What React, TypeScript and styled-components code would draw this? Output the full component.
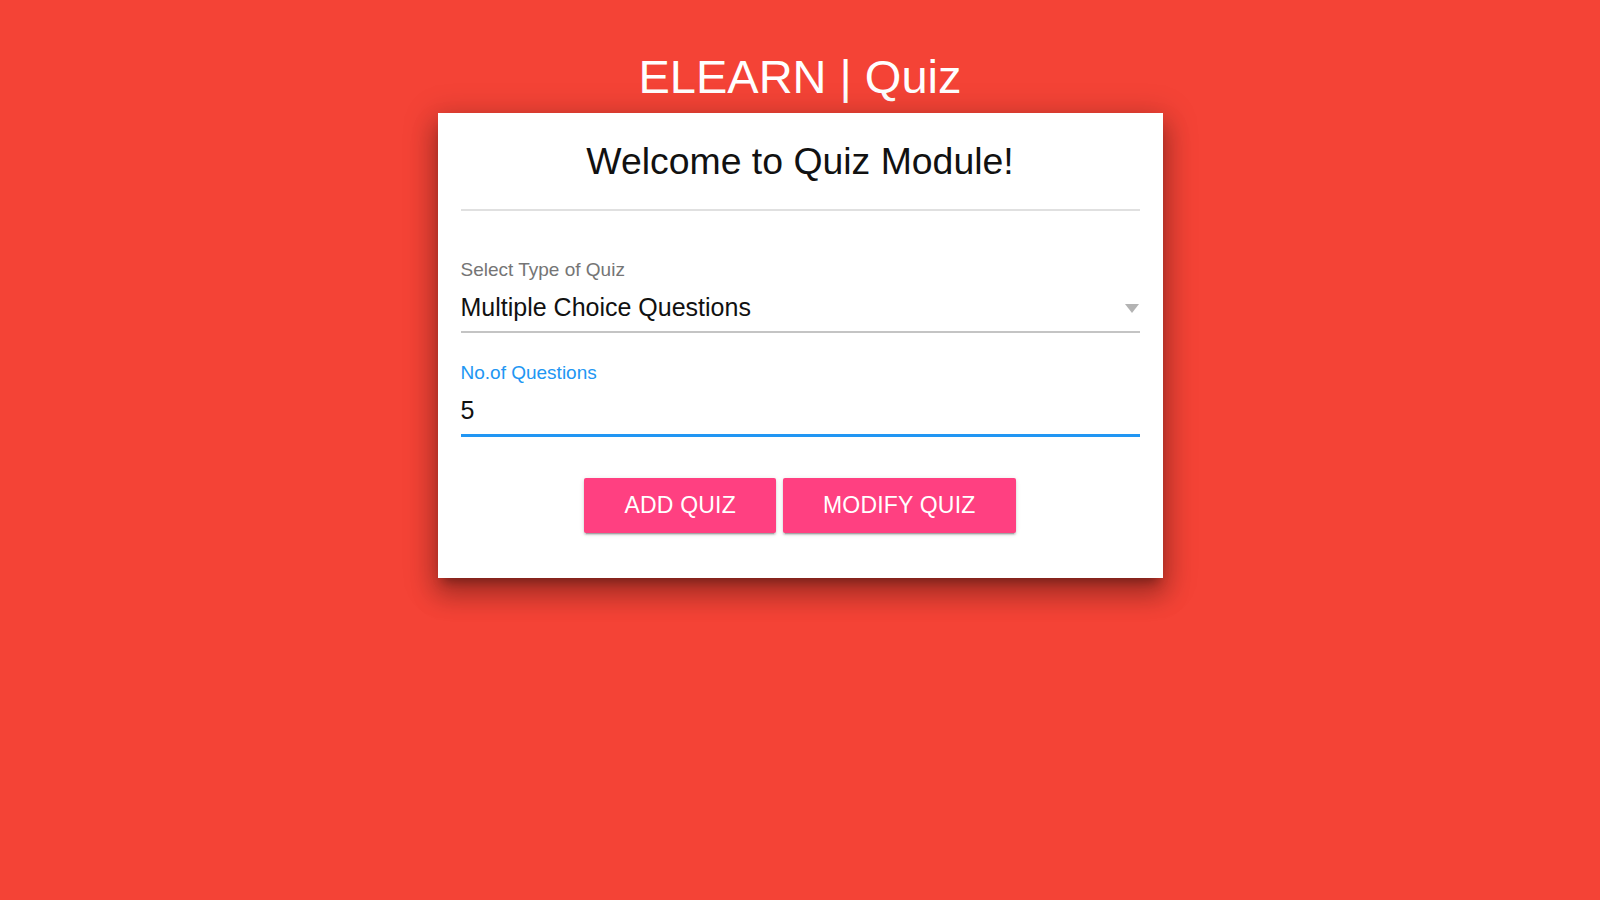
import React from "react";
import styled, { createGlobalStyle } from "styled-components";

const GlobalStyle = createGlobalStyle`
  html, body {
    margin: 0;
    padding: 0;
    background: #f44336;
    font-family: "Liberation Sans", Arial, sans-serif;
  }
`;

const Page = styled.div`
  width: 1600px;
  height: 900px;
  display: flex;
  flex-direction: column;
  align-items: center;
  box-sizing: border-box;
  padding-top: 50px;
`;

const Title = styled.h1`
  margin: 0 0 9px;
  font-size: 47px;
  font-weight: 400;
  line-height: 54px;
  color: #ffffff;
`;

const Card = styled.div`
  width: 725px;
  box-sizing: border-box;
  background: #ffffff;
  padding: 27px 23px 45px;
  display: flex;
  flex-direction: column;
  box-shadow: 0 16px 24px 2px rgba(0, 0, 0, 0.22),
    0 6px 30px 5px rgba(0, 0, 0, 0.18), 0 8px 10px -5px rgba(0, 0, 0, 0.3);
`;

const CardTitle = styled.h2`
  margin: 0;
  font-size: 37.4px;
  font-weight: 400;
  line-height: 43px;
  color: #111111;
  text-align: center;
  padding-bottom: 26px;
  border-bottom: 2px solid #e0e0e0;
`;

const Field = styled.div<{ $top: number }>`
  display: flex;
  flex-direction: column;
  margin-top: ${(p) => p.$top}px;
`;

const Label = styled.label<{ $active?: boolean }>`
  font-size: 19px;
  line-height: 21px;
  color: ${(p) => (p.$active ? "#2196f3" : "#757575")};
`;

const InputRow = styled.div<{ $active?: boolean }>`
  display: flex;
  align-items: center;
  justify-content: space-between;
  margin-top: 13px;
  height: 28px;
  padding-bottom: 10px;
  border-bottom: ${(p) => (p.$active ? "3px solid #2196f3" : "2px solid #c4c4c4")};
`;

const Value = styled.span`
  font-size: 25px;
  line-height: 28px;
  color: #111111;
`;

const Caret = styled.svg`
  width: 14px;
  height: 9px;
  margin-right: 1px;
  margin-top: 2px;
`;

const Buttons = styled.div`
  display: flex;
  justify-content: center;
  gap: 7px;
  margin-top: 41px;
`;

const Button = styled.button`
  height: 55px;
  padding: 0 40px;
  border: none;
  border-radius: 2px;
  background: #ff4081;
  color: #ffffff;
  font-family: "Liberation Sans", Arial, sans-serif;
  font-size: 23px;
  letter-spacing: 0.2px;
  text-transform: uppercase;
  cursor: pointer;
  box-shadow: 0 2px 2px 0 rgba(0, 0, 0, 0.14), 0 3px 1px -2px rgba(0, 0, 0, 0.2),
    0 1px 5px 0 rgba(0, 0, 0, 0.12);
`;

export default function App() {
  return (
    <>
      <GlobalStyle />
      <Page>
        <Title>ELEARN | Quiz</Title>
        <Card>
          <CardTitle>Welcome to Quiz Module!</CardTitle>
          <Field $top={48}>
            <Label>Select Type of Quiz</Label>
            <InputRow>
              <Value>Multiple Choice Questions</Value>
              <Caret viewBox="0 0 14 9">
                <path d="M0 0 L14 0 L7 9 Z" fill="#b3b3b3" />
              </Caret>
            </InputRow>
          </Field>
          <Field $top={29}>
            <Label $active>No.of Questions</Label>
            <InputRow $active>
              <Value>5</Value>
            </InputRow>
          </Field>
          <Buttons>
            <Button>Add Quiz</Button>
            <Button>Modify Quiz</Button>
          </Buttons>
        </Card>
      </Page>
    </>
  );
}
